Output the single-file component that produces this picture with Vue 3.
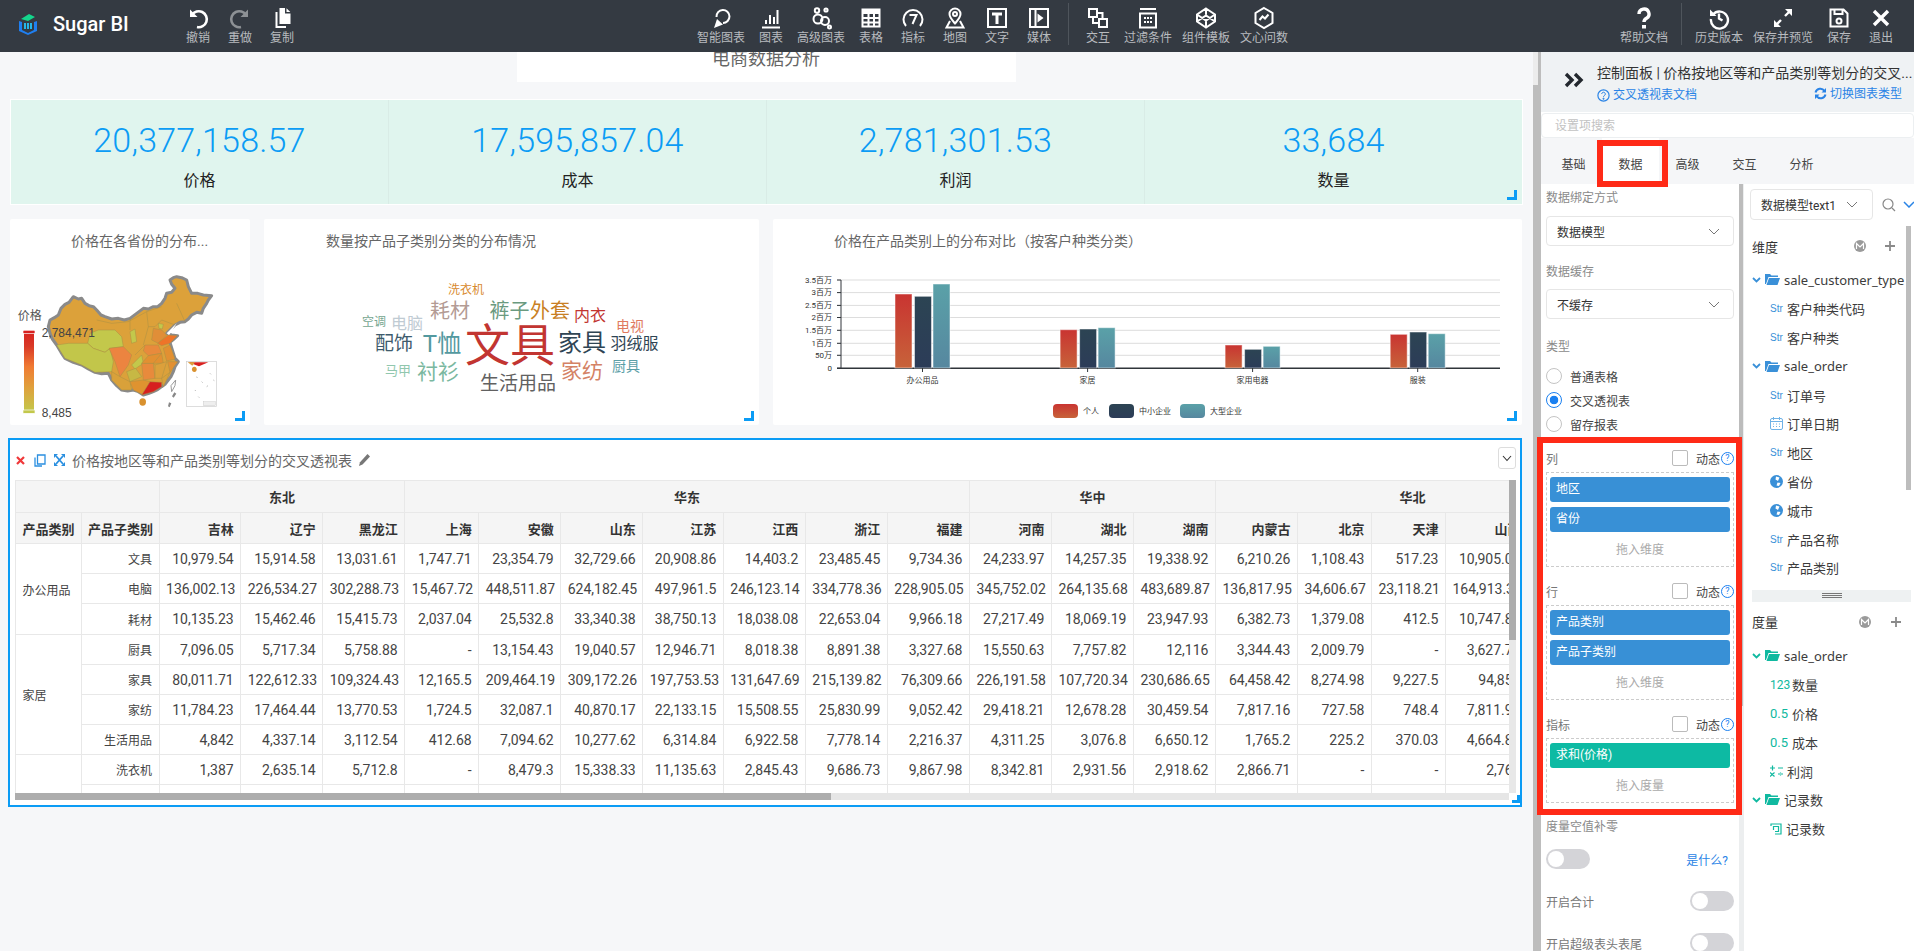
<template>
  <div class="app">
    <!-- top toolbar -->
    <header class="topbar">
      <div class="bar-left">
        <div class="logo">
          <svg width="22" height="22" viewBox="0 0 22 22">
            <path d="M4 6l8-5 6 3-7 4z" fill="#14d68c" />
            <path d="M2 8l3 1v8l6 3 6-3V9l3-1v10l-9 4-9-4z" fill="#1f7ff0" />
            <path d="M7 10h2v6H7zM10 10h2v6h-2zM13 10h2v6h-2z" fill="#25b6e8" />
          </svg>
          <span>Sugar BI</span>
        </div>
        <div v-for="t in leftTools" :key="t.label" class="tool" :class="{ off: t.off }">
          <svg viewBox="0 0 24 24" :stroke-width="t.w || 2">
            <path class="ic-s" :d="t.s" />
            <path class="ic-f" :d="t.f" />
          </svg>
          <span>{{ t.label }}</span>
        </div>
      </div>
      <div class="bar-mid">
        <div v-for="t in midTools" :key="t.label" class="tool">
          <svg viewBox="0 0 24 24" :stroke-width="t.w || 2">
            <path class="ic-s" :d="t.s" />
            <path class="ic-f" :d="t.f" />
          </svg>
          <span>{{ t.label }}</span>
        </div>
        <i class="bar-sep"></i>
        <div v-for="t in midTools2" :key="t.label" class="tool">
          <svg viewBox="0 0 24 24" :stroke-width="t.w || 2">
            <path class="ic-s" :d="t.s" />
            <path class="ic-f" :d="t.f" />
          </svg>
          <span>{{ t.label }}</span>
        </div>
      </div>
      <div class="bar-right">
        <div class="tool">
          <svg viewBox="0 0 24 24" stroke-width="3.4">
            <path class="ic-s" d="M7 8a5 5 0 1 1 7.5 4.3c-1.6 1-2.5 1.7-2.5 3.7" />
            <path class="ic-f" d="M10 19h4v3.5h-4z" />
          </svg>
          <span>帮助文档</span>
        </div>
        <i class="bar-sep"></i>
        <div v-for="t in rightTools" :key="t.label" class="tool">
          <svg viewBox="0 0 24 24" :stroke-width="t.w || 2">
            <path class="ic-s" :d="t.s" />
            <path class="ic-f" :d="t.f" />
          </svg>
          <span>{{ t.label }}</span>
        </div>
      </div>
    </header>

    <div class="work">
      <!-- canvas -->
      <main class="canvas">
        <div class="page-title"><span>电商数据分析</span></div>

        <section class="kpi">
          <div v-for="k in kpis" :key="k.label" class="kpi-cell">
            <div class="kpi-num">{{ k.value }}</div>
            <div class="kpi-label">{{ k.label }}</div>
          </div>
          <i class="corner"></i>
        </section>

        <section class="charts">
          <div class="card">
            <h4 class="card-title t1">价格在各省份的分布...</h4>
            <svg class="plot" viewBox="10 263 240 162">
              <g transform="translate(15 265) scale(0.33333)">
                <path class="china" d="M105 165L118 158 130 150 138 130 150 118 162 112 175 95 190 102 200 100 210 115 222 122 235 125 245 135 258 150 270 155 290 162 310 160 328 165 345 160 365 145 385 130 400 132 415 125 428 125 440 115 450 100 455 85 470 82 480 70 470 58 465 45 475 38 485 35 500 38 515 45 520 65 530 85 548 85 565 90 590 92 580 105 575 115 565 130 560 145 545 142 530 150 520 162 510 170 495 172 480 180 468 192 455 205 470 210 488 212 475 224 465 232 472 255 480 280 490 290 480 305 475 320 468 335 460 345 450 358 440 365 428 374 415 380 400 386 385 390 370 380 355 375 338 378 320 375 305 362 290 345 285 335 280 325 260 326 240 322 220 312 200 300 175 292 150 280 138 262 125 240 112 222 105 205 100 185z" />
                <g class="prov">
                  <path v-for="p in provinces" :key="p.d" :d="p.d" :fill="p.c" />
                  <path d="M245 165L290 175 340 170 395 140 440 125M395 140L400 185 385 240M345 195L345 160M485 115L510 170M480 180L440 165 420 185 400 185M390 240L360 270M420 300L415 295 440 265" fill="none" />
                </g>
                <path d="M455 205L485 175 470 200 462 210z" fill="#fff" />
                <path d="M468 362L482 345 480 362 470 380z" fill="#fff" stroke="#999" stroke-width="3" />
                <path d="M478 382l6 4-8 12-5-4zM462 412l7 3-5 12-5-3z" fill="#888" />
                <ellipse cx="383" cy="411" rx="10" ry="11" fill="#d9912f" />
                <rect x="515" y="290" width="90" height="135" fill="#fff" stroke="#ccc" stroke-width="2" />
                <path d="M520 292h60l-28 12z" fill="#d7201f" />
                <path d="M518 292h22l-8 10z" fill="#dba03a" />
                <ellipse cx="538" cy="313" rx="7" ry="8" fill="#d9912f" />
                <path d="M545 335l2 4M560 350l3 3M585 325l3 3M575 365l4-3M550 395l3 3M540 375l2 3M595 345l3 2" stroke="#999" stroke-width="2" />
                <rect x="565" y="410" width="36" height="12" fill="#eee" stroke="#bbb" />
                <text class="map-name" x="8" y="166">价格</text>
                <defs>
                  <linearGradient id="vm" x1="0" y1="0" x2="0" y2="1">
                    <stop offset="0" stop-color="#d7201f" />
                    <stop offset="0.2" stop-color="#d93a27" />
                    <stop offset="0.45" stop-color="#f07b33" />
                    <stop offset="0.7" stop-color="#e0a03c" />
                    <stop offset="1" stop-color="#c3c84b" />
                  </linearGradient>
                </defs>
                <rect x="27" y="195" width="30" height="245" fill="url(#vm)" />
                <rect x="24" y="196" width="36" height="9" fill="#d7201f" stroke="#fff" stroke-width="2" />
                <rect x="24" y="435" width="36" height="10" fill="#c3c84b" stroke="#fff" stroke-width="2" />
                <text class="map-num" x="80" y="215">2,784,471</text>
                <text class="map-num" x="80" y="455">8,485</text>
              </g>
            </svg>
            <i class="corner"></i>
          </div>

          <div class="card">
            <h4 class="card-title t2">数量按产品子类别分类的分布情况</h4>
            <svg class="plot" viewBox="264 263 495 162">
              <text
                v-for="w in words"
                :key="w.t"
                class="word"
                :x="w.x"
                :y="w.y"
                :font-size="w.s"
                :fill="w.c"
              >{{ w.t }}</text>
            </svg>
            <i class="corner"></i>
          </div>

          <div class="card">
            <h4 class="card-title t3">价格在产品类别上的分布对比（按客户种类分类）</h4>
            <svg class="plot" viewBox="773 263 749 162">
              <defs>
                <linearGradient id="b0" x1="0" y1="0" x2="0" y2="1"><stop offset="0" stop-color="#c93431" /><stop offset="1" stop-color="#c7633a" /></linearGradient>
                <linearGradient id="b1" x1="0" y1="0" x2="0" y2="1"><stop offset="0" stop-color="#2c4453" /><stop offset="1" stop-color="#2c3c58" /></linearGradient>
                <linearGradient id="b2" x1="0" y1="0" x2="0" y2="1"><stop offset="0" stop-color="#5aa1a8" /><stop offset="1" stop-color="#56879f" /></linearGradient>
              </defs>
              <g v-for="a in yTicks" :key="a.t">
                <line x1="837" x2="1500" :y1="a.y" :y2="a.y" :stroke="a.t === '0' ? '#30353a' : '#dddddd'" :stroke-width="a.t === '0' ? 1.4 : 1" />
                <line x1="837" x2="841" :y1="a.y" :y2="a.y" stroke="#30353a" />
                <text class="tick" x="832" :y="a.y" text-anchor="end">{{ a.t }}</text>
              </g>
              <line x1="841" x2="841" y1="280" y2="368" stroke="#30353a" />
              <g v-for="g in barGroups" :key="g.name">
                <rect
                  v-for="(top, i) in g.tops"
                  :key="i"
                  :x="g.c + [-27.5, -8, 10.5][i]"
                  :y="top"
                  width="17"
                  :height="368 - top"
                  :fill="`url(#b${i})`"
                  stroke="#fff"
                  stroke-opacity="0.5"
                />
                <line :x1="g.c" :x2="g.c" y1="368" y2="372" stroke="#30353a" />
                <text class="tick" :x="g.c" y="380" text-anchor="middle">{{ g.name }}</text>
              </g>
              <g v-for="(l, i) in barLegend" :key="l.t">
                <rect :x="l.x" y="404" width="25" height="14" rx="4" :fill="`url(#b${i})`" />
                <text class="tick" :x="l.x + 30" y="411">{{ l.t }}</text>
              </g>
            </svg>
            <i class="corner"></i>
          </div>
        </section>

        <!-- selected pivot table -->
        <section class="pivot">
          <div class="pivot-head">
            <svg class="ph-x" width="9" height="9" viewBox="0 0 9 9"><path d="M1 1l7 7M8 1L1 8" stroke="#f0383a" stroke-width="2.2" /></svg>
            <svg class="ph-copy" width="12" height="13" viewBox="0 0 12 13" fill="none" stroke="#2a8fe0" stroke-width="1.3"><path d="M3.5 1h7.500v9H3.500zM1 3.500V12h7" /></svg>
            <svg class="ph-move" width="11" height="12" viewBox="0 0 11 12"><path d="M2 2l7 8M9 2L2 10" stroke="#2a8fe0" stroke-width="1.800" /><path d="M0 0h4L0 4zM11 0v4L7 0zM0 12V8l4 4zM11 12H7l4-4z" fill="#2a8fe0" /></svg>
            <span class="ph-title">价格按地区等和产品类别等划分的交叉透视表</span>
            <svg class="ph-pen" width="13" height="14" viewBox="0 0 13 14"><path d="M9.500 1l2.500 2.500L4.500 11.500 1 13l1-3.800z" fill="#777" /></svg>
            <span class="ph-drop">
              <svg width="10" height="7" viewBox="0 0 10 7" fill="none" stroke="#333" stroke-width="1.1"><path d="M1 1l4 4.500L9 1" /></svg>
            </span>
          </div>
          <div class="pivot-main">
            <div class="pivot-clip">
              <table class="pt">
                <colgroup>
                  <col v-for="(w, i) in colWidths" :key="i" :style="{ width: w + 'px' }" />
                </colgroup>
                <thead>
                  <tr class="h1">
                    <th colspan="2"></th>
                    <th v-for="r in regions" :key="r.name" :colspan="r.span" class="ctr">{{ r.name }}</th>
                  </tr>
                  <tr class="h2">
                    <th class="lft">产品类别</th>
                    <th>产品子类别</th>
                    <th v-for="p in provNames" :key="p">{{ p }}</th>
                  </tr>
                </thead>
                <tbody>
                  <tr v-for="row in rows" :key="row.sub" :style="{ height: row.h + 'px' }">
                    <td v-if="row.cat !== undefined" :rowspan="row.span" class="lft cjk">{{ row.cat }}</td>
                    <td class="cjk">{{ row.sub }}</td>
                    <td v-for="(v, i) in row.vals" :key="i">{{ v }}</td>
                  </tr>
                </tbody>
              </table>
            </div>
            <div class="vbar"><i></i></div>
          </div>
          <div class="hbar"><i></i></div>
          <i class="corner small"></i>
        </section>
      </main>

      <div class="gutter"><i></i></div>

      <!-- side panel -->
      <aside class="panel">
        <div class="panel-head">
          <svg class="collapse" width="20" height="16" viewBox="0 0 20 16" fill="none" stroke="#23282e" stroke-width="3.4"><path d="M2 2l6 6-6 6M11 2l6 6-6 6" /></svg>
          <div class="panel-titles">
            <div class="panel-title">控制面板 | 价格按地区等和产品类别等划分的交叉...</div>
            <div class="panel-sub">
              <span class="doc-link">
                <svg width="13" height="13" viewBox="0 0 13 13"><circle cx="6.500" cy="6.500" r="5.600" fill="none" stroke="#2a84e6" stroke-width="1.200" /><path d="M4.700 5a1.800 1.800 0 1 1 2.700 1.600c-.6.3-.9.600-.9 1.300M6 9.200h1v1H6z" fill="none" stroke="#2a84e6" /></svg>
                交叉透视表文档
              </span>
              <span class="doc-link up">
                <svg width="13" height="13" viewBox="0 0 13 13" fill="none" stroke="#2a84e6" stroke-width="2"><path d="M1.500 5.500A5 5 0 0 1 10.500 4M11.500 7.500A5 5 0 0 1 2.500 9" /><path d="M12 1v4.500H7.500zM1 12V7.500h4.500z" fill="#2a84e6" stroke="none" /></svg>
                切换图表类型
              </span>
            </div>
          </div>
        </div>
        <div class="panel-search">设置项搜索</div>
        <nav class="tabs">
          <span v-for="t in tabs" :key="t" class="tab" :class="{ on: t === '数据' }">{{ t }}</span>
        </nav>

        <div class="panel-body">
          <div class="cfg">
            <div class="cfg-label first">数据绑定方式</div>
            <div class="select wide">
              数据模型
              <svg width="12" height="7" viewBox="0 0 12 7" fill="none" stroke="#777"><path d="M1 1l5 5 5-5" /></svg>
            </div>
            <div class="cfg-label">数据缓存</div>
            <div class="select wide">
              不缓存
              <svg width="12" height="7" viewBox="0 0 12 7" fill="none" stroke="#777"><path d="M1 1l5 5 5-5" /></svg>
            </div>
            <div class="cfg-label type">类型</div>
            <div class="radios">
              <label v-for="r in radios" :key="r" class="radio" :class="{ on: r === '交叉透视表' }"><i></i>{{ r }}</label>
            </div>

            <div v-for="b in bins" :key="b.name" class="bin">
              <div class="bin-head">
                <span class="bin-name">{{ b.name }}</span>
                <i class="check"></i>
                <span class="dyn">动态</span>
                <i class="q">?</i>
              </div>
              <div class="bin-box">
                <div v-for="c in b.chips" :key="c" class="chip" :class="b.kind">{{ c }}</div>
                <div class="drop">{{ b.hint }}</div>
              </div>
            </div>

            <div class="cfg-label zero">度量空值补零</div>
            <div class="sw-row top">
              <i class="switch"></i>
              <a class="what">是什么?</a>
            </div>
            <div class="sw-row"><span>开启合计</span><i class="switch"></i></div>
            <div class="sw-row"><span>开启超级表头表尾</span><i class="switch"></i></div>
          </div>

          <div class="split"><i></i></div>

          <div class="fields">
            <div class="field-top">
              <div class="select model">
                数据模型text1
                <svg width="12" height="7" viewBox="0 0 12 7" fill="none" stroke="#777"><path d="M1 1l5 5 5-5" /></svg>
              </div>
              <svg class="f-search" width="14" height="14" viewBox="0 0 14 14" fill="none" stroke="#888" stroke-width="1.200"><circle cx="6" cy="6" r="5" /><path d="M10 10l3 3" /></svg>
              <svg class="f-caret" width="12" height="7" viewBox="0 0 12 7" fill="none" stroke="#2a84e6" stroke-width="1.500"><path d="M1 1l5 5 5-5" /></svg>
            </div>

            <div class="f-head">
              <span>维度</span>
              <svg class="f-m" width="12" height="12" viewBox="0 0 12 12"><circle cx="6" cy="6" r="6" fill="#9a9a9a" /><path d="M2.500 9V3.500L6 7l3.500-3.500V9" fill="none" stroke="#fff" stroke-width="1.200" /></svg>
              <svg class="f-plus" width="12" height="12" viewBox="0 0 12 12"><path d="M6 1v10M1 6h10" stroke="#8a8a8a" stroke-width="1.800" /></svg>
            </div>
            <div class="tree">
              <div v-for="n in dims" :key="n.t" class="node" :class="{ folder: n.folder }">
                <template v-if="n.folder">
                  <svg class="caret" width="9" height="6" viewBox="0 0 9 6" fill="none" stroke="#3a90d8" stroke-width="1.800"><path d="M1 1l3.500 3.500L8 1" /></svg>
                  <svg width="15" height="11" viewBox="0 0 15 11" fill="#3a90d8"><path d="M0 0h5l1.500 1.500H13V3H3.500L1 10H0zM4 4h11l-2.500 7H1.500z" /></svg>
                </template>
                <span v-else-if="n.icon === 'str'" class="str">Str</span>
                <svg v-else-if="n.icon === 'date'" class="n-ic" width="13" height="13" viewBox="0 0 13 13" fill="none" stroke="#6fb2e6"><rect x="0.500" y="1.500" width="12" height="11" rx="1.500" /><path d="M0.500 4.500h12M3.500 0v3M9.500 0v3M3 7h1M6 7h1M9 7h1M3 9.500h1M6 9.500h1M9 9.500h1" /></svg>
                <svg v-else class="n-ic" width="13" height="13" viewBox="0 0 13 13"><circle cx="6.500" cy="6.500" r="6.500" fill="#3a90d8" /><path d="M6 1.500l3.500 1L8 6 5.500 4.500zM7.500 7.500l3 .5-1.500 3-2.500-.5z" fill="#fff" /></svg>
                <span class="n-txt">{{ n.t }}</span>
              </div>
            </div>
            <i class="f-thumb"></i>

            <div class="f-split"><i></i><i></i><i></i></div>

            <div class="f-head second">
              <span>度量</span>
              <svg class="f-m" width="12" height="12" viewBox="0 0 12 12"><circle cx="6" cy="6" r="6" fill="#9a9a9a" /><path d="M2.500 9V3.500L6 7l3.500-3.500V9" fill="none" stroke="#fff" stroke-width="1.200" /></svg>
              <svg class="f-plus" width="12" height="12" viewBox="0 0 12 12"><path d="M6 1v10M1 6h10" stroke="#8a8a8a" stroke-width="1.800" /></svg>
            </div>
            <div class="tree two">
              <div v-for="n in measures" :key="n.k" class="node" :class="{ folder: n.folder }">
                <template v-if="n.folder">
                  <svg class="caret" width="9" height="6" viewBox="0 0 9 6" fill="none" stroke="#10b9a0" stroke-width="1.800"><path d="M1 1l3.500 3.500L8 1" /></svg>
                  <svg width="15" height="11" viewBox="0 0 15 11" fill="#10b9a0"><path d="M0 0h5l1.500 1.500H13V3H3.500L1 10H0zM4 4h11l-2.500 7H1.500z" /></svg>
                </template>
                <span v-else-if="n.icon === '123'" class="num">123</span>
                <span v-else-if="n.icon === '0.5'" class="dec">0.5</span>
                <svg v-else-if="n.icon === 'calc'" class="n-ic" width="13" height="12" viewBox="0 0 13 12" fill="none" stroke="#10b9a0" stroke-width="1.200"><path d="M0 3h5M2.500 .5v5M8 3h5M0 7.500l4.500 4M4.500 7.500L0 11.500M8 9h5M10.500 7v.5M10.500 10.500v.5" /></svg>
                <svg v-else class="n-ic" width="12" height="12" viewBox="0 0 12 12" fill="none" stroke="#10b9a0" stroke-width="1.200"><path d="M1 3V1h10v10H5M3.500 7V3.500h5v5H5" /></svg>
                <span class="n-txt">{{ n.t }}</span>
              </div>
            </div>
          </div>
        </div>
      </aside>
    </div>

    <!-- red annotation frames drawn over the screenshot -->
    <i class="mark mark-tab"></i>
    <i class="mark mark-bins"></i>
  </div>
</template>

<script setup>
const c = (x, y, r) => `M${x - r} ${y}a${r} ${r} 0 1 0 ${2 * r} 0a${r} ${r} 0 1 0 ${-2 * r} 0`

const leftTools = [
  { label: '撤销', s: 'M6 9a8 8 0 1 1 5 12', f: 'M4 3.500V11h7.500z', w: 2.6 },
  { label: '重做', s: 'M18 9a8 8 0 1 0-5 12', f: 'M20 3.500V11h-7.500z', w: 2.6, off: true },
  { label: '复制', s: '', f: 'M9.500 2H15v5.500h5.500V18h-11zM16.500 2.300l3.800 3.800h-3.800zM7.500 6v14H16v2H5.500V6z' },
]

const midTools = [
  { label: '智能图表', s: 'M7.500 11A6.500 6.500 0 1 1 14 17', f: 'M5 22l3-9 6 5.500z' },
  { label: '图表', s: 'M3 21.500h18M7 18v-4M11 18V9M15 18v-7M18.500 18V4', f: '' },
  { label: '高级图表', s: c(8, 4.5, 2.2) + c(17, 4, 1.6) + c(9, 13, 4.5) + c(16, 15, 4) + c(20.5, 21, 1.5), f: '' },
  { label: '表格', s: 'M3.500 3.500h17v17h-17zM3.500 12h17M3.500 16.500h17M9.500 8v12M15 8v12', f: 'M3 3h18v5H3z' },
  { label: '指标', s: 'M5 20A9.500 9.500 0 1 1 19 20M8.500 9h7l-4 9', f: '' },
  { label: '地图', s: 'M12 2.500a5.500 5.500 0 0 0-5.500 5.500c0 3.500 3.500 7 5.500 9.500 2-2.500 5.500-6 5.500-9.500A5.500 5.500 0 0 0 12 2.500z' + c(12, 8, 2) + 'M7 15l-3.500 6.500h17L17 15', f: '' },
  { label: '文字', s: 'M3 3h18v18H3z', f: 'M7 6.500h10v3h-3.500V18h-3V9.500H7z' },
  { label: '媒体', s: 'M3 3h18v18H3zM8.500 3v18', f: 'M10.500 7.500l6 4.500-6 4.500z' },
]

const midTools2 = [
  { label: '交互', s: 'M3 3h8v8H3zM13 13h8v8h-8zM11 7h5.500v6M7 11v6h6', f: '' },
  { label: '过滤条件', s: 'M4 3h16M4 7.500h16v14H4z', f: 'M8 11h2v2H8zM11 11h2v2h-2zM14 11h2v2h-2zM8 15h2v2H8zM11 15h2v2h-2zM14 15h2v2h-2z' },
  { label: '组件模板', s: 'M12 2.500l9 6v7l-9 6-9-6v-7zM12 2.500v6M3 8.500l9 6 9-6M3 15.500l9-6 9 6M12 14.500v7', f: '' },
  { label: '文心问数', s: 'M12 2l8.500 5v10L12 22l-8.500-5V7zM7.500 14l3-3.500 2.500 2 3.500-4', f: '' },
]

const rightTools = [
  { label: '历史版本', s: 'M6 8.500A8.500 8.500 0 1 1 4 13M12 7.500v5l3.500 2', f: 'M3 3.500V10h6.500z', w: 2.4 },
  { label: '保存并预览', s: 'M14 10l6-6M10 14l-6 6', f: 'M14 3h7v7zM3 14l7 7H3z', w: 2.4 },
  { label: '保存', s: 'M3.500 3.500h13l4 4v13h-17zM7.500 3.500V8h8V3.500' + c(12, 15, 2.5), f: '' },
  { label: '退出', s: 'M5 5l14 14M19 5L5 19', f: '', w: 3.4 },
]

const kpis = [
  { value: '20,377,158.57', label: '价格' },
  { value: '17,595,857.04', label: '成本' },
  { value: '2,781,301.53', label: '利润' },
  { value: '33,684', label: '数量' },
]

const provinces = [
  { d: 'M218 235L225 205 250 195 300 195 320 215 325 245 285 250 270 262 235 250z', c: '#c3c84b' },
  { d: 'M125 240L160 235 218 235 235 250 270 262 285 250 295 290 290 320 240 322 200 300 150 280z', c: '#c2c64a' },
  { d: 'M282 250L325 245 350 270 340 300 315 335 300 290z', c: '#ec8440' },
  { d: 'M350 300L380 270 385 295 360 312z', c: '#c3c84b' },
  { d: 'M335 320L362 310 380 335 345 350z', c: '#c7b844' },
  { d: 'M290 320L315 335 345 350 350 375 320 375 290 345z', c: '#d9a13a' },
  { d: 'M345 350L385 345 405 350 385 390 355 375z', c: '#df9330' },
  { d: 'M380 295L415 295 420 340 385 345z', c: '#e88a3c' },
  { d: 'M390 240L430 240 440 265 400 272 385 258z', c: '#e88a3c' },
  { d: 'M400 272L440 265 445 295 380 295z', c: '#e29032' },
  { d: 'M445 250L465 240 480 282 455 288z', c: '#e29032' },
  { d: 'M420 300L455 290 440 340 420 340z', c: '#dca03b' },
  { d: 'M458 290L488 290 465 322z', c: '#e29032' },
  { d: 'M440 340L465 322 445 365z', c: '#d9a13a' },
  { d: 'M415 190L440 195 455 210 430 235 410 225z', c: '#e08e38' },
  { d: 'M428 235L460 210 487 212 465 235 440 242z', c: '#ee7429' },
  { d: 'M380 390L405 350 440 352 440 365 415 380z', c: '#d7201f' },
  { d: 'M345 200L360 192 365 230 350 235z', c: '#c3c84b' },
  { d: 'M430 175L445 178 442 192 432 190z', c: '#c3c84b' },
]

const words = [
  { t: '洗衣机', x: 466, y: 289.5, s: 12, c: '#d88a2f' },
  { t: '耗材', x: 450, y: 311, s: 20, c: '#b39b94' },
  { t: '裤子', x: 509.5, y: 311, s: 20, c: '#6a9a7f' },
  { t: '外套', x: 550, y: 311, s: 20, c: '#c97f24' },
  { t: '内衣', x: 590, y: 315, s: 16, c: '#c23531' },
  { t: '空调', x: 374, y: 322, s: 12, c: '#75a690' },
  { t: '电脑', x: 407, y: 323, s: 16, c: '#c0cbd3' },
  { t: '电视', x: 630, y: 326, s: 14, c: '#e07a5f' },
  { t: '配饰', x: 394, y: 343, s: 19, c: '#3e5b6c' },
  { t: 'T恤', x: 442, y: 344, s: 24, c: '#53999f' },
  { t: '文具', x: 510, y: 346, s: 45, c: '#c23531' },
  { t: '家具', x: 582, y: 343, s: 24, c: '#2f4554' },
  { t: '羽绒服', x: 634.5, y: 343, s: 16, c: '#2f4554' },
  { t: '厨具', x: 626, y: 366, s: 14, c: '#5b9ea6' },
  { t: '家纺', x: 582, y: 371, s: 21, c: '#d48265' },
  { t: '马甲', x: 398, y: 370, s: 13, c: '#91c7ae' },
  { t: '衬衫', x: 438, y: 372, s: 21, c: '#7ab8a0' },
  { t: '生活用品', x: 518, y: 383, s: 19, c: '#616161' },
]

const yTicks = [
  { t: '3.5百万', y: 280 },
  { t: '3百万', y: 292.6 },
  { t: '2.5百万', y: 305.4 },
  { t: '2百万', y: 317.5 },
  { t: '1.5百万', y: 330.3 },
  { t: '1百万', y: 343.3 },
  { t: '50万', y: 355.3 },
  { t: '0', y: 368.3 },
]

const barGroups = [
  { name: '办公用品', c: 922.5, tops: [294, 296.3, 284] },
  { name: '家居', c: 1087.6, tops: [329.7, 329, 327.7] },
  { name: '家用电器', c: 1252.6, tops: [345, 349.3, 346.3] },
  { name: '服装', c: 1417.7, tops: [334.3, 332, 333.7] },
]

const barLegend = [
  { t: '个人', x: 1053 },
  { t: '中小企业', x: 1109 },
  { t: '大型企业', x: 1180 },
]

const regions = [
  { name: '东北', span: 3 },
  { name: '华东', span: 7 },
  { name: '华中', span: 3 },
  { name: '华北', span: 5 },
]

const provNames = ['吉林', '辽宁', '黑龙江', '上海', '安徽', '山东', '江苏', '江西', '浙江', '福建', '河南', '湖北', '湖南', '内蒙古', '北京', '天津', '山西', '河北']

const colWidths = [65.6, 78, 81.6, 82, 82, 74, 82, 82, 80.6, 82, 82, 82, 82, 82, 82, 82, 74, 74, 82, 82]

const rows = [
  { cat: '办公用品', span: 3, sub: '文具', h: 30, vals: ['10,979.54', '15,914.58', '13,031.61', '1,747.71', '23,354.79', '32,729.66', '20,908.86', '14,403.2', '23,485.45', '9,734.36', '24,233.97', '14,257.35', '19,338.92', '6,210.26', '1,108.43', '517.23', '10,905.07', ''] },
  { sub: '电脑', h: 30, vals: ['136,002.13', '226,534.27', '302,288.73', '15,467.72', '448,511.87', '624,182.45', '497,961.5', '246,123.14', '334,778.36', '228,905.05', '345,752.02', '264,135.68', '483,689.87', '136,817.95', '34,606.67', '23,118.21', '164,913.36', ''] },
  { sub: '耗材', h: 31, vals: ['10,135.23', '15,462.46', '15,415.73', '2,037.04', '25,532.8', '33,340.38', '38,750.13', '18,038.08', '22,653.04', '9,966.18', '27,217.49', '18,069.19', '23,947.93', '6,382.73', '1,379.08', '412.5', '10,747.84', ''] },
  { cat: '家居', span: 4, sub: '厨具', h: 30, vals: ['7,096.05', '5,717.34', '5,758.88', '-', '13,154.43', '19,040.57', '12,946.71', '8,018.38', '8,891.38', '3,327.68', '15,550.63', '7,757.82', '12,116', '3,344.43', '2,009.79', '-', '3,627.73', ''] },
  { sub: '家具', h: 30, vals: ['80,011.71', '122,612.33', '109,324.43', '12,165.5', '209,464.19', '309,172.26', '197,753.53', '131,647.69', '215,139.82', '76,309.66', '226,191.58', '107,720.34', '230,686.65', '64,458.42', '8,274.98', '9,227.5', '94,852', ''] },
  { sub: '家纺', h: 30, vals: ['11,784.23', '17,464.44', '13,770.53', '1,724.5', '32,087.1', '40,870.17', '22,133.15', '15,508.55', '25,830.99', '9,052.42', '29,418.21', '12,678.28', '30,459.54', '7,817.16', '727.58', '748.4', '7,811.92', ''] },
  { sub: '生活用品', h: 30, vals: ['4,842', '4,337.14', '3,112.54', '412.68', '7,094.62', '10,277.62', '6,314.84', '6,922.58', '7,778.14', '2,216.37', '4,311.25', '3,076.8', '6,650.12', '1,765.2', '225.2', '370.03', '4,664.83', ''] },
  { cat: '', span: 2, sub: '洗衣机', h: 30, vals: ['1,387', '2,635.14', '5,712.8', '-', '8,479.3', '15,338.33', '11,135.63', '2,845.43', '9,686.73', '9,867.98', '8,342.81', '2,931.56', '2,918.62', '2,866.71', '-', '-', '2,768', ''] },
  { sub: '', h: 30, vals: Array(18).fill('') },
]

const tabs = ['基础', '数据', '高级', '交互', '分析']
const radios = ['普通表格', '交叉透视表', '留存报表']

const bins = [
  { name: '列', chips: ['地区', '省份'], hint: '拖入维度', kind: 'dim' },
  { name: '行', chips: ['产品类别', '产品子类别'], hint: '拖入维度', kind: 'dim' },
  { name: '指标', chips: ['求和(价格)'], hint: '拖入度量', kind: 'mea' },
]

const dims = [
  { t: 'sale_customer_type', folder: true },
  { t: '客户种类代码', icon: 'str' },
  { t: '客户种类', icon: 'str' },
  { t: 'sale_order', folder: true },
  { t: '订单号', icon: 'str' },
  { t: '订单日期', icon: 'date' },
  { t: '地区', icon: 'str' },
  { t: '省份', icon: 'geo' },
  { t: '城市', icon: 'geo' },
  { t: '产品名称', icon: 'str' },
  { t: '产品类别', icon: 'str' },
]

const measures = [
  { k: 1, t: 'sale_order', folder: true },
  { k: 2, t: '数量', icon: '123' },
  { k: 3, t: '价格', icon: '0.5' },
  { k: 4, t: '成本', icon: '0.5' },
  { k: 5, t: '利润', icon: 'calc' },
  { k: 6, t: '记录数', folder: true },
  { k: 7, t: '记录数', icon: 'rec' },
]
</script>

<style>
html,
body {
  margin: 0;
  overflow: hidden;
  background: #f6f7f9;
}
</style>

<style scoped>
.app {
  position: relative;
  width: 1914px;
  height: 951px;
  overflow: hidden;
  display: flex;
  flex-direction: column;
  font-family: Roboto, "Noto Sans CJK SC", sans-serif;
  color: #333;
  background: #f6f7f9;
}
i {
  font-style: normal;
  display: block;
}

/* top bar */
.topbar {
  height: 52px;
  flex: none;
  display: flex;
  background: #343a42;
  color: #b8bbbf;
  padding-right: 12px;
  box-sizing: border-box;
  position: relative;
  z-index: 2;
}
.bar-left {
  width: 692px;
  display: flex;
}
.logo {
  width: 177px;
  display: flex;
  align-items: center;
  padding-left: 17px;
  box-sizing: border-box;
  gap: 14px;
  color: #fff;
  font-size: 20px;
  font-weight: 500;
  height: 48px;
}
.bar-mid {
  display: flex;
  flex: 1;
}
.bar-right {
  display: flex;
}
.bar-sep {
  width: 1px;
  height: 42px;
  margin: 3px 8px 0;
  background: #4f555c;
}
.tool {
  padding: 6px 5px 0;
  min-width: 32px;
  display: flex;
  flex-direction: column;
  align-items: center;
  font-size: 12px;
  line-height: 16px;
  white-space: nowrap;
}
.tool svg {
  width: 24px;
  height: 24px;
}
.ic-s {
  fill: none;
  stroke: #fff;
}
.ic-f {
  fill: #fff;
  stroke: none;
}
.tool.off .ic-s {
  stroke: #8d9195;
}
.tool.off .ic-f {
  fill: #8d9195;
}

/* canvas */
.work {
  flex: 1;
  display: flex;
  min-height: 0;
}
.canvas {
  width: 1533px;
  flex: none;
  padding: 0 11px 0 10px;
  box-sizing: border-box;
}
.gutter {
  width: 8px;
  flex: none;
  background: #bdbdbd;
  display: flex;
}
.gutter i {
  width: 5px;
  height: 33px;
  background: #ececec;
}
.page-title {
  width: 499px;
  height: 30px;
  margin: 0 auto;
  background: #fff;
  overflow: hidden;
  text-align: center;
  font-size: 18px;
  color: #666;
  line-height: 24px;
}
.page-title span {
  display: block;
  margin-top: -5px;
}
.kpi {
  position: relative;
  margin: 18px 0 0 1px;
  height: 104px;
  display: flex;
  background: #e0f5ee;
  box-shadow: 0 0 0 1px #fff;
}
.kpi-cell {
  flex: 1 1 0;
  text-align: center;
  border-left: 1px solid #d9ece6;
}
.kpi-cell:first-child {
  border-left: 0;
}
.kpi-num {
  margin-top: 21px;
  font-size: 34px;
  font-weight: 300;
  letter-spacing: 0.2px;
  line-height: 38px;
  color: #0b9cf5;
}
.kpi-label {
  margin-top: 11px;
  font-size: 16px;
  line-height: 22px;
  color: #222;
}
.corner {
  position: absolute;
  right: 5px;
  bottom: 4px;
  width: 7px;
  height: 7px;
  border-right: 3px solid #0b9cf5;
  border-bottom: 3px solid #0b9cf5;
}
.corner.small {
  right: 0px;
  bottom: 2px;
  width: 5px;
  height: 5px;
}
.charts {
  margin-top: 15px;
  display: grid;
  grid-template-columns: 240px 495px 1fr;
  gap: 14px;
}
.card {
  position: relative;
  height: 206px;
  background: #fff;
  border-radius: 2px;
}
.card-title {
  margin: 0;
  height: 44px;
  padding-top: 14px;
  box-sizing: border-box;
  font-size: 14px;
  line-height: 16px;
  font-weight: 400;
  color: #666;
}
.t1 {
  padding-left: 61px;
}
.t2 {
  padding-left: 62px;
}
.t3 {
  padding-left: 61px;
}
.plot {
  display: block;
  width: 100%;
  height: 162px;
}
.china {
  fill: #dca13a;
  stroke: #8a8a8a;
  stroke-width: 9;
  stroke-linejoin: round;
}
.prov path {
  stroke: #a88f45;
  stroke-width: 1.5;
}
.map-name {
  font-size: 36px;
  fill: #555;
}
.map-num {
  font-size: 36px;
  fill: #444;
  font-family: "Liberation Sans", sans-serif;
}
.word {
  text-anchor: middle;
  dominant-baseline: central;
}
.tick {
  font-size: 8px;
  fill: #333;
  dominant-baseline: central;
}

/* pivot */
.pivot {
  position: relative;
  margin: 13px 0 0 -2px;
  height: 369px;
  background: #fff;
  border: 2px solid #0b9cf5;
  box-sizing: border-box;
  padding-left: 5px;
}
.pivot-head {
  height: 40px;
  display: flex;
  align-items: center;
  padding-top: 0;
  font-size: 14px;
  color: #666;
}
.ph-x {
  margin-left: 1px;
}
.ph-copy {
  margin-left: 9px;
}
.ph-move {
  margin-left: 8px;
}
.ph-title {
  margin-left: 7px;
  white-space: nowrap;
}
.ph-pen {
  margin-left: 6px;
}
.ph-drop {
  position: absolute;
  right: 4px;
  top: 7px;
  width: 18px;
  height: 22px;
  border: 1px solid #ddd;
  border-radius: 3px;
  box-sizing: border-box;
  display: flex;
  align-items: center;
  justify-content: center;
}
.pivot-main {
  display: flex;
  height: 313px;
}
.pivot-clip {
  width: 1494px;
  height: 313px;
  overflow: hidden;
}
.vbar {
  width: 7px;
  height: 313px;
  background: #e8e8e8;
}
.vbar i {
  height: 160px;
  background: #adadad;
}
.hbar {
  width: 1494px;
  height: 7px;
  background: #e6e6e6;
}
.hbar i {
  width: 816px;
  height: 7px;
  background: #adadad;
}
.pt {
  table-layout: fixed;
  border-collapse: collapse;
  width: 1593.8px;
  font-size: 14px;
  color: #444;
}
.pt th,
.pt td {
  border: 1px solid #e8e8e8;
  padding: 0 6.5px;
  text-align: right;
  white-space: nowrap;
  overflow: hidden;
}
.pt th {
  background: #f5f5f5;
  font-size: 13px;
  font-weight: 700;
  color: #333;
}
.pt td.cjk {
  font-size: 12px;
}
.pt .h1 {
  height: 32px;
}
.pt .h2 {
  height: 31px;
}
.pt .ctr {
  text-align: center;
}
.pt .lft {
  text-align: left;
}

/* side panel */
.panel {
  width: 373px;
  flex: none;
  background: #fff;
  display: flex;
  flex-direction: column;
  font-size: 12px;
  min-height: 0;
}
.panel-head {
  height: 60px;
  flex: none;
  display: flex;
  background: #eff2f4;
  padding-left: 23px;
  box-sizing: border-box;
}
.collapse {
  margin-top: 20px;
}
.panel-titles {
  margin-left: 13px;
  width: 315px;
  padding-top: 11px;
}
.panel-title {
  font-size: 14px;
  line-height: 20px;
  color: #333;
  white-space: nowrap;
}
.panel-sub {
  margin-top: 1px;
  display: flex;
  justify-content: space-between;
  padding-right: 10px;
  color: #2a84e6;
}
.doc-link {
  display: flex;
  align-items: center;
  gap: 3px;
  line-height: 16px;
  margin-top: 3px;
}
.doc-link.up {
  margin-top: 0;
}
.panel-search {
  flex: none;
  height: 25px;
  margin-top: 1px;
  background: #fff;
  border-radius: 4px;
  border: 1px solid #eceff1;
  box-sizing: border-box;
  padding-left: 13px;
  line-height: 25px;
  color: #c2c2c2;
}
.tabs {
  flex: none;
  height: 46px;
  display: flex;
  background: #f5f6f8;
  padding-left: 4px;
}
.tab {
  width: 57px;
  text-align: center;
  padding-top: 8px;
  line-height: 38px;
  color: #444;
}
.tab.on {
  background: #fff;
}
.panel-body {
  flex: 1;
  min-height: 0;
  display: flex;
  overflow: hidden;
}
.cfg {
  width: 198px;
  flex: none;
  padding-left: 5px;
  box-sizing: border-box;
}
.split {
  width: 5px;
  flex: none;
  background: #eceeef;
}
.split i {
  width: 4px;
  height: 522px;
  background: #bcbcbc;
}
.cfg-label {
  font-size: 12px;
  line-height: 16px;
  color: #8a8a8a;
  margin-top: 18px;
}
.cfg-label.first {
  margin-top: 6px;
}
.cfg-label.type {
  margin-top: 20px;
}
.cfg-label.zero {
  margin-top: 16px;
}
.select {
  box-sizing: border-box;
  border: 1px solid #e6e6e6;
  border-radius: 4px;
  background: #fff;
  display: flex;
  align-items: center;
  justify-content: space-between;
  color: #333;
}
.select.wide {
  width: 188px;
  height: 30px;
  margin-top: 9px;
  padding: 0 13px 0 10px;
}
.cfg-label.first + .select {
  margin-top: 10px;
}
.radios {
  margin-top: 9px;
}
.radio {
  height: 24px;
  display: flex;
  align-items: center;
  gap: 8px;
  color: #444;
}
.radio i {
  width: 14px;
  height: 14px;
  border: 1px solid #c4c4c4;
  border-radius: 50%;
  background: #fff;
}
.radio.on i {
  border: 1px solid #1a80f0;
  background: radial-gradient(circle, #1a80f0 0 4px, #fff 4.6px);
}
.bin {
  margin-top: 16px;
}
.radios + .bin {
  margin-top: 14px;
}
.bin-head {
  height: 16px;
  display: flex;
  align-items: center;
  width: 188px;
  color: #444;
}
.bin-name {
  color: #777;
  flex: 1;
  margin-top: 1px;
}
.check {
  width: 16px;
  height: 16px;
  box-sizing: border-box;
  border: 1px solid #bbb;
  border-radius: 2px;
}
.dyn {
  margin-left: 8px;
}
.q {
  width: 11px;
  height: 11px;
  margin-left: 1px;
  border: 1px solid #1a80f0;
  border-radius: 50%;
  color: #1a80f0;
  font-size: 9px;
  line-height: 11px;
  text-align: center;
}
.bin-box {
  margin-top: 6px;
  width: 188px;
  box-sizing: border-box;
  border: 1px dashed #ccc;
  padding: 4px 3px 0;
}
.chip {
  height: 25px;
  margin-bottom: 5px;
  border-radius: 3px;
  padding-left: 6px;
  line-height: 25px;
  color: #fff;
}
.chip.dim {
  background: #3890d6;
}
.chip.mea {
  background: #0dbaa3;
}
.drop {
  height: 29px;
  line-height: 27px;
  text-align: center;
  color: #aaa;
}
.sw-row {
  margin-top: 22px;
  width: 188px;
  height: 20px;
  display: flex;
  justify-content: space-between;
  align-items: center;
  color: #777;
}
.sw-row.top {
  margin-top: 14px;
}
.switch {
  width: 44px;
  height: 20px;
  background: #d4d4d8;
  border-radius: 10px;
  position: relative;
}
.switch::after {
  content: "";
  position: absolute;
  left: 2px;
  top: 2px;
  width: 16px;
  height: 16px;
  background: #fff;
  border-radius: 50%;
}
.what {
  color: #2a84e6;
  margin-right: 6px;
}
.fields {
  position: relative;
  flex: 1;
  padding-left: 6px;
  min-width: 0;
}
.field-top {
  display: flex;
  align-items: center;
  margin-top: 5px;
}
.select.model {
  width: 123px;
  height: 31px;
  padding: 0 14px 0 10px;
  flex: none;
}
.f-search {
  margin-left: 9px;
  flex: none;
}
.f-caret {
  margin-left: 7px;
  flex: none;
}
.f-head {
  margin-top: 16px;
  height: 20px;
  display: flex;
  align-items: center;
  padding-left: 2px;
  font-size: 13px;
  color: #333;
  position: relative;
}
.f-m {
  position: absolute;
  left: 104px;
  top: 4px;
}
.f-plus {
  position: absolute;
  left: 134px;
  top: 4px;
}
.f-head.second {
  margin-top: 10px;
}
.f-head.second .f-m {
  left: 109px;
}
.f-head.second .f-plus {
  left: 140px;
}
.tree {
  margin-top: 9.6px;
}
.tree.two {
  margin-top: 9.6px;
}
.node {
  height: 28.8px;
  display: flex;
  align-items: center;
  padding-left: 20px;
  font-size: 13px;
  color: #3c3c3c;
  white-space: nowrap;
}
.node.folder {
  padding-left: 2px;
  gap: 4px;
}
.str {
  width: 13px;
  font-size: 10px;
  color: #3a90d8;
  font-family: "Liberation Sans", sans-serif;
}
.num,
.dec {
  color: #10b9a0;
  width: 18px;
  font-size: 12px;
}
.dec {
  font-size: 13px;
}
.node .n-ic {
  flex: none;
}
.n-txt {
  margin-left: 4px;
}
.node.folder .n-txt {
  margin-left: 0;
  font-family: "Noto Sans", "Noto Sans CJK SC", sans-serif;
}
.f-thumb {
  position: absolute;
  left: 162px;
  top: 42px;
  width: 5px;
  height: 264px;
  background: #bdbdbd;
}
.f-split {
  margin-top: 7.6px;
  margin-left: 2px;
  width: 159px;
  height: 12px;
  background: #eef1f2;
  display: flex;
  flex-direction: column;
  align-items: center;
  justify-content: center;
  gap: 1px;
}
.f-split i {
  width: 20px;
  height: 1px;
  background: #777;
}

/* red frames */
.mark {
  position: absolute;
  border: 6px solid #ff2a17;
  box-sizing: border-box;
  z-index: 3;
  pointer-events: none;
}
.mark-tab {
  left: 1597px;
  top: 140px;
  width: 71px;
  height: 47px;
}
.mark-bins {
  left: 1537px;
  top: 437px;
  width: 205px;
  height: 378px;
}
</style>
